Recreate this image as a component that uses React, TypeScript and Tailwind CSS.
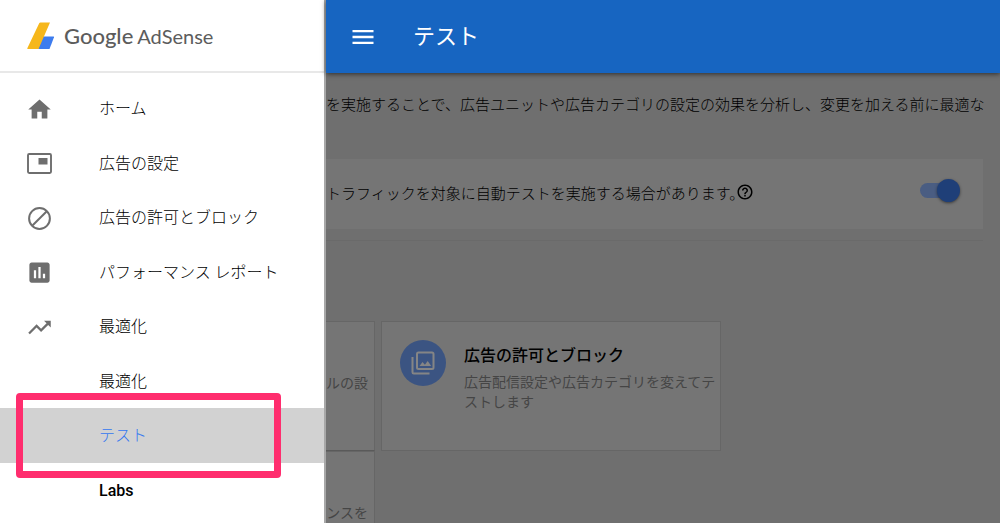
import React from "react";
import { MdHelpOutline, MdHome, MdMenu, MdPoll, MdTrendingUp } from "react-icons/md";

type IconProps = { size?: number };

type NavItem = {
  label: string;
  icon?: React.ComponentType<IconProps>;
  active?: boolean;
  strong?: boolean;
};

function AdSettingsIcon({ size = 27 }: IconProps) {
  return (
    <svg width={size} height={size} viewBox="0 0 27 27" fill="none" aria-hidden="true">
      <rect x="2" y="4" width="23" height="19" rx="1.2" stroke="currentColor" strokeWidth="1.9" />
      <rect x="12.5" y="8" width="9" height="6.5" fill="currentColor" />
    </svg>
  );
}

function BlockIcon({ size = 27 }: IconProps) {
  return (
    <svg width={size} height={size} viewBox="0 0 27 27" fill="none" stroke="currentColor" strokeWidth="2" aria-hidden="true">
      <circle cx="13.5" cy="13.5" r="10.4" />
      <path d="M6.2 20.8 20.8 6.2" />
    </svg>
  );
}

function GalleryIcon() {
  return (
    <svg width="24" height="24" viewBox="0 0 24 24" fill="none" stroke="currentColor" strokeWidth="2" aria-hidden="true">
      <rect x="6" y="1.5" width="16.5" height="16.5" rx="1.5" />
      <path d="M1.5 6v15.2q0 1.3 1.3 1.3H18.5" />
      <path d="M8.5 15l3-4 2.4 2.8 2.8-3.8 3.5 5z" fill="currentColor" stroke="none" />
    </svg>
  );
}

const NAV_ITEMS: NavItem[] = [
  { label: "ホーム", icon: MdHome },
  { label: "広告の設定", icon: AdSettingsIcon },
  { label: "広告の許可とブロック", icon: BlockIcon },
  { label: "パフォーマンス レポート", icon: MdPoll },
  { label: "最適化", icon: MdTrendingUp },
  { label: "最適化" },
  { label: "テスト", active: true },
  { label: "Labs", strong: true },
];

function Logo() {
  return (
    <div className="flex items-center gap-[9px]">
      <svg width="28" height="28" viewBox="0 0 28 28" aria-hidden="true">
        <path d="M16 14.5h10.5q.8 0 .5.8L22.5 27H11z" fill="#3d7cee" />
        <path d="M12.2 1.2q.3-.7 1.2-.7H23L11.5 27H.8q-.8 0-.5-.8z" fill="#f6b71b" />
      </svg>
      <span className="flex items-baseline gap-1 font-[Lato,sans-serif] text-[#5c5c5c]">
        <span className="text-[22px] font-medium">Google</span>
        <span className="text-[20px]">AdSense</span>
      </span>
    </div>
  );
}

function Sidebar() {
  return (
    <aside className="w-[326px] shrink-0 border-r-2 border-[#a8a8a8] bg-white">
      {/* Brand */}
      <div className="flex h-[73px] items-center border-b-2 border-[#e8e8e8] px-[27px]">
        <Logo />
      </div>

      {/* Navigation */}
      <nav className="pt-2">
        <ul className="grid h-[436px] auto-rows-fr">
          {NAV_ITEMS.map(({ label, icon: Icon, active, strong }, i) => (
            <li key={i} className={active ? "relative bg-[#d2d2d2]" : ""}>
              <a href="#" className="flex h-full items-center gap-[45px] pt-[2px] pl-[26px] text-base">
                <span className="flex w-7 text-[#6e6e6e]">{Icon && <Icon size={27} />}</span>
                <span
                  className={
                    active
                      ? "font-light text-[#3478f0]"
                      : strong
                        ? "font-medium text-black"
                        : "font-light text-black"
                  }
                >
                  {label}
                </span>
              </a>
              {/* Highlight frame */}
              {active && (
                <div className="pointer-events-none absolute -inset-y-[15px] right-[43px] left-4 z-10 rounded border-[7px] border-[#ff2d6e]" />
              )}
            </li>
          ))}
        </ul>
      </nav>
    </aside>
  );
}

function Header() {
  return (
    <header className="relative flex h-[73px] shrink-0 items-center gap-[36px] bg-[#1765c1] pl-[23px] text-white shadow-[0_1px_5px_rgba(0,0,0,0.6)]">
      <button type="button" aria-label="メニュー">
        <MdMenu size={28} />
      </button>
      <h1 className="text-[22px]">テスト</h1>
    </header>
  );
}

export default function App() {
  return (
    <div className="flex h-screen overflow-hidden font-[Roboto,'Noto_Sans_CJK_JP',sans-serif]">
      <Sidebar />

      <div className="flex min-w-0 flex-1 flex-col bg-[#6f6f6f] text-black">
        <Header />

        <main className="min-h-0 flex-1 overflow-hidden">
          <div className="mr-[17px]">
            <p className="h-[86px] pt-5 text-[15px] leading-6 font-light whitespace-nowrap">
              を実施することで、広告ユニットや広告カテゴリの設定の効果を分析し、変更を加える前に最適な
            </p>

            {/* Auto test switch */}
            <div className="flex h-[70px] items-center justify-between bg-[#757575] pr-[23px]">
              <label htmlFor="auto-test" className="flex items-center text-[15px] font-light whitespace-nowrap">
                トラフィックを対象に自動テストを実施する場合があります。
                <MdHelpOutline size={18} className="mb-1 -ml-2" />
              </label>
              <input
                id="auto-test"
                type="checkbox"
                role="switch"
                defaultChecked
                className="relative mb-2 h-[23px] w-[40px] shrink-0 appearance-none before:absolute before:inset-y-1 before:left-0 before:w-8 before:rounded-full before:bg-[#4a5d82] after:absolute after:right-0 after:size-[23px] after:rounded-full after:bg-[#1f3f78] after:shadow-[0_1px_3px_rgba(0,0,0,0.5)]"
              />
            </div>

            <hr className="mt-[11px] border-[#6a6a6a]" />
          </div>

          {/* Test type cards */}
          <div className="mt-20 flex items-start gap-[6px] text-sm leading-5 text-[#454545]">
            <div className="w-[49px] shrink-0">
              <div className="flex h-[130px] justify-end border border-l-0 border-[#666666] border-b-[#5a5a5a] bg-[#757575] pt-[51px] pr-[6px] whitespace-nowrap">
                ルの設
              </div>
              <div className="flex h-[130px] justify-end border border-l-0 border-[#666666] bg-[#757575] pt-[51px] pr-[6px] whitespace-nowrap">
                ンスを
              </div>
            </div>

            <section className="flex h-[130px] w-[340px] items-start gap-[18px] border border-[#666666] bg-[#757575] pt-[18px] pl-[18px]">
              <div className="flex size-[46px] shrink-0 items-center justify-center rounded-full bg-[#3b5482] text-[#858585]">
                <GalleryIcon />
              </div>
              <div className="pt-1">
                <h2 className="text-base leading-6 font-medium text-black">広告の許可とブロック</h2>
                <p className="mt-1">広告配信設定や広告カテゴリを変えてテストします</p>
              </div>
            </section>
          </div>
        </main>
      </div>
    </div>
  );
}
